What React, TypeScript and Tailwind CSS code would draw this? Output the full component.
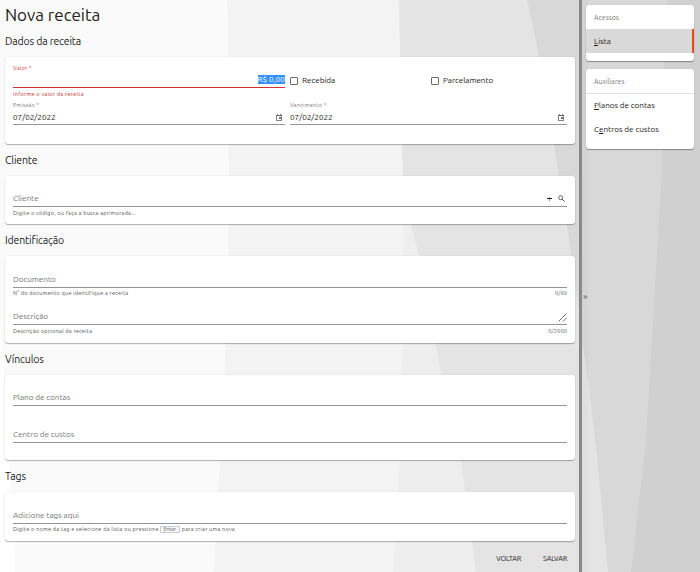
import React, { ReactNode } from "react";

function Backdrop() {
  return (
    <svg className="absolute inset-0 -z-10" width="700" height="572" viewBox="0 0 700 572">
      <rect width="700" height="572" fill="#fafafa" />
      <polygon points="0,320 8,440 15,572 0,572" fill="#ffffff" />
      <polygon points="227,0 229,170 228,290 224,380 219,475 214,572 700,572 700,0" fill="#f3f3f3" />
      <polygon points="399,0 403,180 403,320 400,458 393,572 700,572 700,0" fill="#eeeeee" />
      <polygon points="399,0 403,180 411,225 419,256 439,362 461,461 476,572 700,572 700,0" fill="#e4e4e4" />
      <polygon points="527,0 538,50 554,145 567,225 579,310 582,340 588,380 597,455 608,572 700,572 700,0" fill="#d8d8d8" />
      <polygon points="667,0 664,70 662,170 653,320 646,440 631,572 700,572 700,0" fill="#d0d0d0" />
      <rect x="582" width="6" height="572" fill="#000" opacity=".02" />
    </svg>
  );
}

function Section({ title, cardClass, children }: { title: string; cardClass: string; children: ReactNode }) {
  return (
    <section>
      <h2 className="flex h-8 items-center pt-[2px] text-[10.5px] tracking-[-0.15px] text-[#222]">{title}</h2>
      <div className={`rounded-[3px] bg-white px-2 shadow-[0_1px_1px_rgba(0,0,0,0.28),0_0_2px_rgba(0,0,0,0.10)] ${cardClass}`}>{children}</div>
    </section>
  );
}

function Calendar() {
  return (
    <svg width="6" height="7" viewBox="0 0 6 7" className="mr-[3px]" fill="none" stroke="#858585" shapeRendering="crispEdges">
      <path d="M0.5 1.5h5v5h-5zM0 1.5h6M1.5 0v1M4.5 0v1" />
      <path d="M0 1.5h6" stroke="#666" />
      <rect x="3" y="3" width="2" height="2" fill="#777" stroke="none" />
    </svg>
  );
}

function DateField({ label, className }: { label: string; className: string }) {
  return (
    <div className={className}>
      <div className="h-[10px] text-[5.6px] leading-[11px] tracking-[0.22px] text-[#777]">{label}</div>
      <div className="flex h-[15px] items-center justify-between border-b border-[#949494] text-[8.2px] tracking-[-0.03px] text-[#222]">
        <span>07/02/2022</span>
        <Calendar />
      </div>
    </div>
  );
}

function Check({ label, className }: { label: string; className: string }) {
  return (
    <div className={`flex h-3 items-center gap-1 text-[8.2px] tracking-[-0.06px] text-[#222] ${className}`}>
      <span className="size-2 rounded-[1px] border border-[#6b6b6b]" />
      <span className="-mt-px">{label}</span>
    </div>
  );
}

function Line({ label, className, children }: { label: string; className: string; children?: ReactNode }) {
  return (
    <div className={`flex items-end justify-between border-b border-[#949494] text-[8.2px] leading-[15px] tracking-[-0.05px] text-[#777] ${className}`}>
      <span>{label}</span>
      {children}
    </div>
  );
}

function Hint({ children, className }: { children: ReactNode; className: string }) {
  return <div className={`flex h-3 items-center justify-between text-[5.6px] tracking-[0.22px] text-[#555] ${className}`}>{children}</div>;
}

const cardShadow = "rounded-[3px] bg-white shadow-[0_1px_1px_rgba(0,0,0,0.35),0_0_2px_rgba(0,0,0,0.10)]";

export default function App() {
  return (
    <div className="relative isolate flex h-[572px] w-[700px] overflow-hidden whitespace-nowrap font-['Ubuntu','Noto_Sans',sans-serif]">
      <Backdrop />
      <main className="w-[579px] pr-1 pl-[5px]">
        <h1 className="flex h-[25px] items-center pt-[5px] text-[17px] tracking-[-0.02px] text-[#222]">Nova receita</h1>
        <Section title="Dados da receita" cardClass="h-[87px] pt-[6px]">
          <div className="flex h-[37px]">
            <div className="w-[272px]">
              <div className="h-[10px] text-[5.6px] leading-[10px] tracking-[0.22px] text-[#d32f2f]">Valor *</div>
              <div className="flex h-[15px] items-start justify-end border-b border-[#d32f2f] pt-[2px]">
                <span className="h-[9px] bg-[#3390ff] text-[8.2px] leading-[9px] text-white">R$ 0,00</span>
              </div>
              <div className="h-3 text-[5.6px] leading-3 tracking-[0.25px] text-[#c62828]">Informe o valor da receita</div>
            </div>
            <Check label="Recebida" className="mt-[12px] ml-[5px] w-[141px]" />
            <Check label="Parcelamento" className="mt-[12px]" />
          </div>
          <div className="flex gap-[5px]">
            <DateField label="Emissão *" className="w-[272px]" />
            <DateField label="Vencimento *" className="w-[277px]" />
          </div>
        </Section>
        <Section title="Cliente" cardClass="h-12">
          <Line label="Cliente" className="h-[31px]">
            <span className="flex h-4 items-center gap-[6px] pr-[2px]">
              <svg width="5" height="5" viewBox="0 0 5 5" shapeRendering="crispEdges">
                <path d="M2.5 0.5v4" stroke="#999" />
                <path d="M0 2.5h5" stroke="#222" />
              </svg>
              <svg width="7" height="7" viewBox="0 0 7 7" fill="none" stroke="#444">
                <circle cx="2.7" cy="2.7" r="2" strokeWidth=".8" />
                <path d="M4.2 4.2L6.5 6.5" />
              </svg>
            </span>
          </Line>
          <Hint className="leading-3">Digite o código, ou faça a busca aprimorada...</Hint>
        </Section>
        <Section title="Identificação" cardClass="h-[87px]">
          <Line label="Documento" className="h-8" />
          <Hint className="pb-[2px] leading-[10px]">
            <span>N° do documento que identifique a receita</span>
            <span className="tracking-[0.1px]">0/60</span>
          </Hint>
          <Line label="Descrição" className="h-[25px]">
            <svg width="9" height="9" viewBox="0 0 9 9" stroke="#555" className="mb-[2px]">
              <path d="M.5 8.5l8-8M5 8.5L8.5 5" strokeWidth=".9" />
            </svg>
          </Line>
          <Hint className="leading-3">
            <span>Descrição opcional da receita</span>
            <span className="tracking-[0.15px]">0/2000</span>
          </Hint>
        </Section>
        <Section title="Vínculos" cardClass="h-[85px]">
          <Line label="Plano de contas" className="h-[31px]" />
          <Line label="Centro de custos" className="h-[37px]" />
        </Section>
        <Section title="Tags" cardClass="h-[49px]">
          <Line label="Adicione tags aqui" className="h-8" />
          <Hint className="pb-[2px] leading-[10px]">
            <span className="flex items-center">
              <span>Digite o nome da tag e selecione da lista ou pressione</span>
              <kbd className="mr-[2px] ml-[1px] h-[7px] w-5 rounded-[1px] border border-b-[1.5px] border-[#c5cad0] bg-[#f8f9fa] text-center font-['Noto_Sans',sans-serif] text-[5px] leading-[4px] tracking-normal text-[#6c7480]">Enter</kbd>
              <span>para criar uma nova</span>
            </span>
          </Hint>
        </Section>
        <div className="flex h-[35px] items-center justify-end gap-[22px] pr-2 text-[7.2px] tracking-[-0.15px] text-[#222]">
          <button>VOLTAR</button>
          <button>SALVAR</button>
        </div>
      </main>
      <div className="w-[3px] bg-[#888]" />
      <div className="flex w-1 items-center pt-[22px] pl-px text-[8px] font-bold text-[#777]">»</div>
      <aside className="w-[108px] pt-[5px] text-[8.2px] tracking-[-0.05px] text-[#222]">
        <nav className={`mb-2 h-14 ${cardShadow}`}>
          <div className="h-6 px-2 text-[7px] leading-6 tracking-normal text-[#777]">Acessos</div>
          <div className="h-6 border-r-2 border-[#e64a19] bg-[#d9d9d9] px-2 leading-6">
            <span className="underline">L</span>ista
          </div>
        </nav>
        <nav className={`h-20 ${cardShadow}`}>
          <div className="h-[25px] border-b border-[#e0e0e0] px-2 text-[7px] leading-6 tracking-normal text-[#777]">Auxiliares</div>
          <div className="h-6 px-2 leading-[22px]">
            <span className="underline">P</span>lanos de contas
          </div>
          <div className="h-6 px-2 leading-[22px]">
            C<span className="underline">e</span>ntros de custos
          </div>
        </nav>
      </aside>
    </div>
  );
}
